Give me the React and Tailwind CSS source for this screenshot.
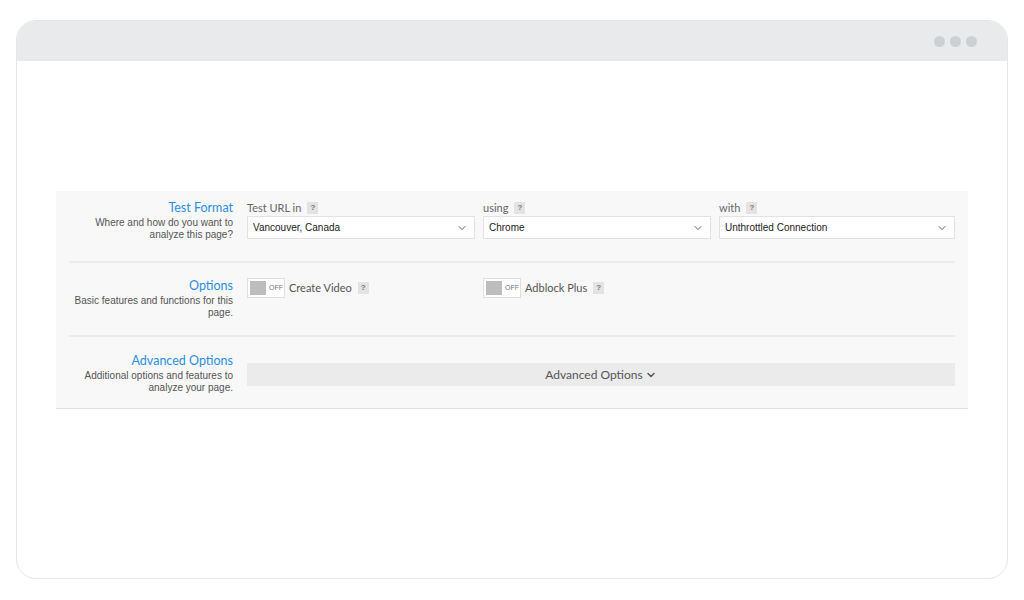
import { ChevronDown } from "lucide-react";

function Help() {
  return (
    <span className="inline-flex items-center justify-center w-[11px] h-[12px] bg-[#e3e3e3] text-[8px] font-bold text-[#777] leading-none ml-1.5 font-['Liberation_Sans',Arial,sans-serif]">?</span>
  );
}

function Select({ value }) {
  return (
    <div className="h-[23px] bg-white border border-[#e2e2e2] flex items-center justify-between pl-[5px] pr-[6px]">
      <span className="text-[10px] text-[#222] font-['Liberation_Sans',Arial,sans-serif]">{value}</span>
      <ChevronDown className="w-3 h-3 text-[#555]" strokeWidth={1.8} />
    </div>
  );
}

function Field({ label, value, className }) {
  return (
    <div className={`flex flex-col ${className}`}>
      <div className="flex items-center h-[16px] text-[11px] text-[#666] font-['Lato',sans-serif]">
        {label}
        <Help />
      </div>
      <Select value={value} />
    </div>
  );
}

function Toggle({ label }) {
  return (
    <div className="flex items-center">
      <div className="w-[38px] h-[20px] bg-white border border-[#e0e0e0] flex items-center pl-[2px]">
        <div className="w-[16px] h-[14px] bg-[#bdbdbd]" />
        <span className="ml-[3px] text-[7px] text-[#777] font-['Liberation_Sans',Arial,sans-serif]">OFF</span>
      </div>
      <span className="ml-1 text-[11px] text-[#555] font-['Lato',sans-serif]">{label}</span>
      <Help />
    </div>
  );
}

function Label({ title, desc }) {
  return (
    <div className="w-[164px] shrink-0 text-right">
      <p className="text-[12.5px] leading-[16px] text-[#2b8ee3] font-['Lato',sans-serif]">{title}</p>
      <p className="text-[10px] leading-[12px] text-[#555] mt-[1px] font-['Liberation_Sans',Arial,sans-serif]">{desc}</p>
    </div>
  );
}

export default function App() {
  return (
    <div className="w-[1024px] h-[600px] bg-white pt-5 px-4 pb-[21px]">
      <div className="h-full rounded-[20px] border border-[#e4e6e8] overflow-hidden flex flex-col">
        {/* title bar */}
        <div className="h-[40px] bg-[#e8eaec] flex items-center justify-end pr-[30px] gap-[5px] shrink-0">
          <div className="w-[11px] h-[11px] rounded-full bg-[#cdd0d3]" />
          <div className="w-[11px] h-[11px] rounded-full bg-[#cdd0d3]" />
          <div className="w-[11px] h-[11px] rounded-full bg-[#cdd0d3]" />
        </div>

        <div className="flex-1 pt-[130px] px-[39px]">
          <div className="bg-[#f8f8f8] border-b border-[#dedede] px-[13px]">
            {/* test format */}
            <div className="flex gap-[14px] pt-[9px] pb-[20px] border-b-2 border-[#ececec]">
              <Label title="Test Format" desc={<>Where and how do you want to<br />analyze this page?</>} />
              <div className="flex-1 flex gap-2">
                <Field className="w-[228px]" label="Test URL in" value="Vancouver, Canada" />
                <Field className="w-[228px]" label="using" value="Chrome" />
                <Field className="flex-1" label="with" value="Unthrottled Connection" />
              </div>
            </div>

            {/* options */}
            <div className="flex gap-[14px] pt-[15px] pb-[16px] border-b-2 border-[#ececec]">
              <Label title="Options" desc={<>Basic features and functions for this<br />page.</>} />
              <div className="flex-1 flex gap-2">
                <div className="w-[228px]"><Toggle label="Create Video" /></div>
                <div className="w-[228px]"><Toggle label="Adblock Plus" /></div>
                <div className="flex-1" />
              </div>
            </div>

            {/* advanced */}
            <div className="flex gap-[14px] pt-[16px] pb-[14px]">
              <Label title="Advanced Options" desc={<>Additional options and features to<br />analyze your page.</>} />
              <div className="flex-1 pt-[10px]">
                <div className="h-[23px] bg-[#ebebeb] flex items-center justify-center text-[12px] text-[#555] font-['Lato',sans-serif]">
                  Advanced Options
                  <ChevronDown className="w-3 h-3 ml-[2px] text-[#555]" strokeWidth={3} />
                </div>
              </div>
            </div>
          </div>
        </div>
      </div>
    </div>
  );
}
